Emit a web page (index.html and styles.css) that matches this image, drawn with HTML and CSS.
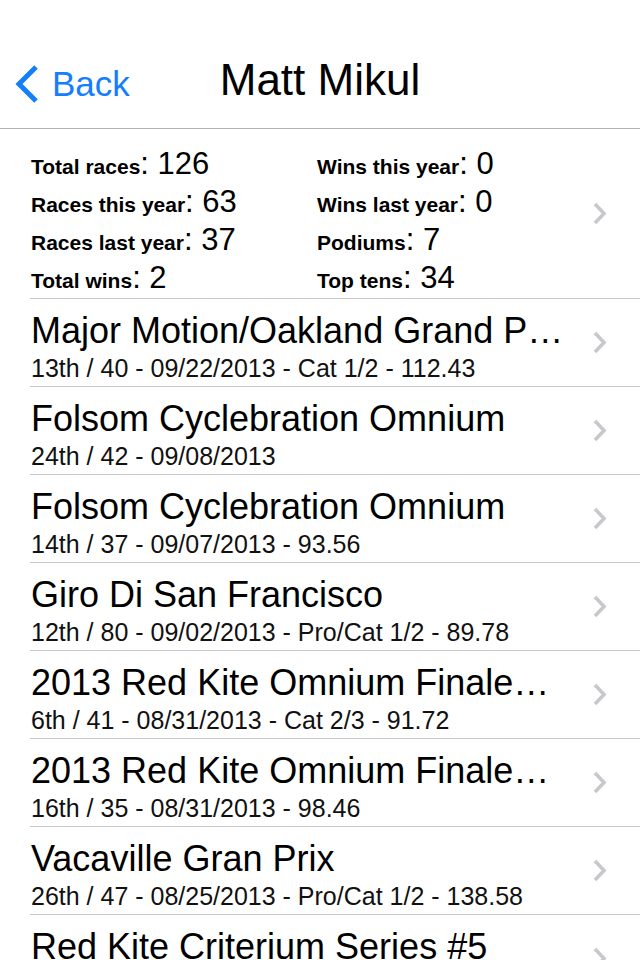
FILE: index.html
```html
<!DOCTYPE html>
<html lang="en">
  <head>
    <meta charset="UTF-8" />
    <meta name="viewport" content="width=device-width, initial-scale=1.0" />
    <title>Matt Mikul</title>
    <link rel="stylesheet" href="styles.css">
  </head>
  <body>
    <header class="navbar">
      <a class="back" href="#">
        <svg class="back-icon" viewBox="0 0 26 40" width="26" height="40">
          <polyline points="22,3 5,20 22,37" />
        </svg>
        <span>Back</span>
      </a>
      <h1>Matt Mikul</h1>
    </header>

    <section class="stats">
      <div class="stat-grid">
        <p><b>Total races</b><span>: 126</span></p>
        <p><b>Wins this year</b><span>: 0</span></p>
        <p><b>Races this year</b><span>: 63</span></p>
        <p><b>Wins last year</b><span>: 0</span></p>
        <p><b>Races last year</b><span>: 37</span></p>
        <p><b>Podiums</b><span>: 7</span></p>
        <p><b>Total wins</b><span>: 2</span></p>
        <p><b>Top tens</b><span>: 34</span></p>
      </div>
      <svg class="chevron" viewBox="0 0 16 26" width="16" height="26">
        <polyline points="3,3 12,12.5 3,22" />
      </svg>
    </section>

    <ul class="races">
      <li>
        <div class="race">
          <h2>Major Motion/Oakland Grand P…</h2>
          <p>13th / 40 - 09/22/2013 - Cat 1/2 - 112.43</p>
        </div>
        <svg class="chevron" viewBox="0 0 16 26" width="16" height="26"><polyline points="3,3 12,12.5 3,22" /></svg>
      </li>
      <li>
        <div class="race">
          <h2>Folsom Cyclebration Omnium</h2>
          <p>24th / 42 - 09/08/2013</p>
        </div>
        <svg class="chevron" viewBox="0 0 16 26" width="16" height="26"><polyline points="3,3 12,12.5 3,22" /></svg>
      </li>
      <li>
        <div class="race">
          <h2>Folsom Cyclebration Omnium</h2>
          <p>14th / 37 - 09/07/2013 - 93.56</p>
        </div>
        <svg class="chevron" viewBox="0 0 16 26" width="16" height="26"><polyline points="3,3 12,12.5 3,22" /></svg>
      </li>
      <li>
        <div class="race">
          <h2>Giro Di San Francisco</h2>
          <p>12th / 80 - 09/02/2013 - Pro/Cat 1/2 - 89.78</p>
        </div>
        <svg class="chevron" viewBox="0 0 16 26" width="16" height="26"><polyline points="3,3 12,12.5 3,22" /></svg>
      </li>
      <li>
        <div class="race">
          <h2>2013 Red Kite Omnium Finale…</h2>
          <p>6th / 41 - 08/31/2013 - Cat 2/3 - 91.72</p>
        </div>
        <svg class="chevron" viewBox="0 0 16 26" width="16" height="26"><polyline points="3,3 12,12.5 3,22" /></svg>
      </li>
      <li>
        <div class="race">
          <h2>2013 Red Kite Omnium Finale…</h2>
          <p>16th / 35 - 08/31/2013 - 98.46</p>
        </div>
        <svg class="chevron" viewBox="0 0 16 26" width="16" height="26"><polyline points="3,3 12,12.5 3,22" /></svg>
      </li>
      <li>
        <div class="race">
          <h2>Vacaville Gran Prix</h2>
          <p>26th / 47 - 08/25/2013 - Pro/Cat 1/2 - 138.58</p>
        </div>
        <svg class="chevron" viewBox="0 0 16 26" width="16" height="26"><polyline points="3,3 12,12.5 3,22" /></svg>
      </li>
      <li>
        <div class="race">
          <h2>Red Kite Criterium Series #5</h2>
          <p>25th / 49 - 08/18/2013 - Cat 1/2/3</p>
        </div>
        <svg class="chevron" viewBox="0 0 16 26" width="16" height="26"><polyline points="3,3 12,12.5 3,22" /></svg>
      </li>
    </ul>
  </body>
</html>
```

FILE: styles.css
```css
* {
  margin: 0;
  padding: 0;
  box-sizing: border-box;
}

body {
  font-family: "Liberation Sans", Arial, sans-serif;
  color: #000;
  background-color: #fff;
}

/* navigation bar */
.navbar {
  height: 129px;
  padding-top: 40px;
  display: grid;
  grid-template-columns: 1fr auto 1fr;
  align-items: center;
  border-bottom: 1px solid #b2b2b2;
}

.navbar h1 {
  font-size: 44px;
  font-weight: 400;
  margin-top: -8px;
}

.back {
  display: flex;
  align-items: center;
  gap: 12px;
  padding-left: 14px;
  color: #147efb;
  text-decoration: none;
  font-size: 35px;
}

.back-icon polyline {
  fill: none;
  stroke: #147efb;
  stroke-width: 5;
}

/* stats block */
.stats {
  display: flex;
  align-items: center;
  height: 170px;
  padding: 0 32px 0 31px;
  position: relative;
}

.stats::after {
  content: "";
  position: absolute;
  left: 30px;
  right: 0;
  bottom: 0;
  border-bottom: 1px solid #c8c7cc;
}

.stat-grid {
  flex: 1;
  display: grid;
  grid-template-columns: 286px 1fr;
  padding-top: 13px;
}

.stat-grid p {
  height: 38px;
  line-height: 38px;
  font-size: 21px;
  white-space: nowrap;
}

.stat-grid b {
  font-weight: 700;
}

.stat-grid span {
  font-size: 31px;
}

.chevron polyline {
  fill: none;
  stroke: #c7c7cc;
  stroke-width: 3.5;
}

/* race list */
.races {
  list-style: none;
}

.races li {
  display: flex;
  align-items: center;
  height: 88px;
  padding: 0 32px 0 31px;
  position: relative;
}

.races li::after {
  content: "";
  position: absolute;
  left: 30px;
  right: 0;
  bottom: 0;
  border-bottom: 1px solid #c8c7cc;
}

.race {
  flex: 1;
  min-width: 0;
  padding-top: 8px;
}

.race h2 {
  font-size: 36px;
  font-weight: 400;
  line-height: 40px;
  white-space: nowrap;
  overflow: hidden;
  text-overflow: ellipsis;
  padding-right: 8px;
}

.race p {
  font-size: 25px;
  line-height: 30px;
  margin-top: 2px;
  color: #111;
}
```
